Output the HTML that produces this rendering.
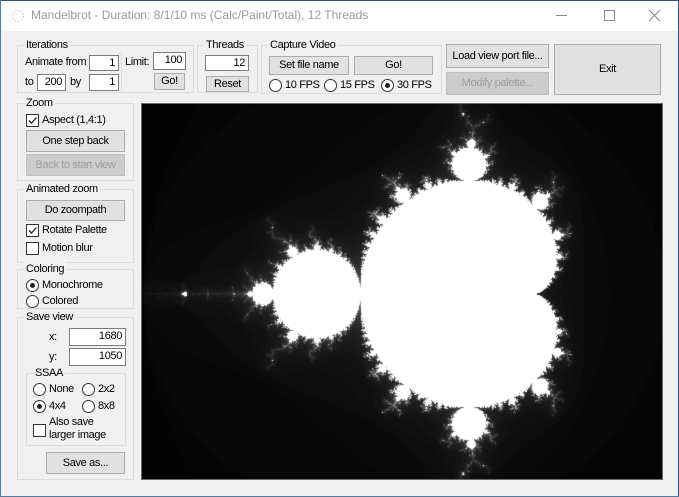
<!DOCTYPE html>
<html><head><style>
*{box-sizing:border-box;margin:0;padding:0}
body{width:679px;height:497px;background:#f0f0f0;font-family:"Liberation Sans",sans-serif;font-size:11px;letter-spacing:-0.35px;color:#000;position:relative;overflow:hidden}
.a{position:absolute;white-space:nowrap}
.tb{position:absolute;left:0;top:0;width:679px;height:31px;background:#fff}
.g{position:absolute;border:1px solid #dcdcdc}
.gl{position:absolute;background:#f0f0f0;padding:0 2px;top:-8px;left:6px;font-size:11px;line-height:14px}
.in{position:absolute;background:#fff;border:1px solid #7a7a7a;text-align:right;padding-right:3px;line-height:15px;font-size:11px}
.bt{position:absolute;background:#e1e1e1;border:1px solid #adadad;text-align:center;font-size:11px}
.dis{background:#cccccc;border-color:#bfbfbf;color:#9d9d9d}
.rd{position:absolute;width:13px;height:13px;border:1px solid #333;border-radius:50%;background:#fff}
.rd.on::after{content:"";position:absolute;left:3px;top:3px;width:5px;height:5px;border-radius:50%;background:#222}
.cb{position:absolute;width:13px;height:13px;border:1px solid #333;background:#fff}
</style></head><body>
<div class="tb"></div>
<div class="a" style="left:0;top:0;width:679px;height:1px;background:#2e5282"></div>
<div class="a" style="left:0;top:0;width:1px;height:497px;background:#5a7aa0"></div>
<div class="a" style="right:0;top:0;width:1px;height:497px;background:#2e5282"></div>
<div class="a" style="left:0;bottom:0;width:679px;height:1px;background:#5a7aa0"></div>
<svg class="a" style="left:11px;top:9px" width="14" height="14"><circle cx="7" cy="7" r="5.5" fill="none" stroke="#ccc" stroke-dasharray="2 1.5"/></svg>
<div class="a" style="left:31px;top:8px;font-size:12px;letter-spacing:0;color:#9a9a9a">Mandelbrot - Duration: 8/1/10 ms (Calc/Paint/Total), 12 Threads</div>
<div class="a" style="left:556px;top:15px;width:11px;height:1px;background:#888"></div>
<div class="a" style="left:604px;top:10px;width:11px;height:11px;border:1px solid #888"></div>
<svg class="a" style="left:648px;top:9px" width="13" height="13"><path d="M1 1L12 12M12 1L1 12" stroke="#888" stroke-width="1"/></svg>

<div class="g" style="left:17px;top:45px;width:177px;height:48px"><span class="gl">Iterations</span></div>
<div class="a" style="left:25px;top:56px">Animate from</div>
<div class="in" style="left:89px;top:55px;width:30px;height:16px">1</div>
<div class="a" style="left:121px;top:52px;width:1px;height:38px;background:#dcdcdc"></div>
<div class="a" style="left:125px;top:56px">Limit:</div>
<div class="in" style="left:153px;top:52px;width:33px;height:18px">100</div>
<div class="a" style="left:25px;top:76px">to</div>
<div class="in" style="left:37px;top:74px;width:29px;height:17px">200</div>
<div class="a" style="left:70px;top:76px">by</div>
<div class="in" style="left:89px;top:74px;width:30px;height:17px">1</div>
<div class="bt" style="left:154px;top:73px;width:31px;height:17px;line-height:15px">Go!</div>

<div class="g" style="left:197px;top:45px;width:61px;height:48px"><span class="gl">Threads</span></div>
<div class="in" style="left:205px;top:55px;width:44px;height:16px">12</div>
<div class="bt" style="left:206px;top:76px;width:43px;height:16px;line-height:14px">Reset</div>

<div class="g" style="left:261px;top:45px;width:181px;height:49px"><span class="gl">Capture Video</span></div>
<div class="bt" style="left:269px;top:56px;width:80px;height:19px;line-height:17px">Set file name</div>
<div class="bt" style="left:354px;top:56px;width:79px;height:19px;line-height:17px">Go!</div>
<div class="rd" style="left:269px;top:79px"></div><div class="a" style="left:285px;top:79px">10 FPS</div>
<div class="rd" style="left:324px;top:79px"></div><div class="a" style="left:340px;top:79px">15 FPS</div>
<div class="rd on" style="left:381px;top:79px"></div><div class="a" style="left:397px;top:79px">30 FPS</div>

<div class="bt" style="left:446px;top:44px;width:103px;height:24px;line-height:22px">Load view port file...</div>
<div class="bt dis" style="left:446px;top:72px;width:103px;height:23px;line-height:21px">Modify palette...</div>
<div class="bt" style="left:554px;top:44px;width:107px;height:51px;line-height:49px">Exit</div>

<div class="g" style="left:17px;top:103px;width:117px;height:78px"><span class="gl">Zoom</span></div>
<div class="cb" style="left:26px;top:114px"></div><svg class="a" style="left:27px;top:115px" width="11" height="11"><path d="M2 5.5L4.5 8L9.5 2.5" fill="none" stroke="#222" stroke-width="1.3"/></svg>
<div class="a" style="left:42px;top:114px">Aspect (1,4:1)</div>
<div class="bt" style="left:26px;top:130px;width:99px;height:22px;line-height:20px">One step back</div>
<div class="bt dis" style="left:26px;top:154px;width:99px;height:22px;line-height:20px">Back to start view</div>

<div class="g" style="left:17px;top:189px;width:117px;height:74px"><span class="gl">Animated zoom</span></div>
<div class="bt" style="left:26px;top:200px;width:99px;height:21px;line-height:19px">Do zoompath</div>
<div class="cb" style="left:26px;top:224px"></div><svg class="a" style="left:27px;top:225px" width="11" height="11"><path d="M2 5.5L4.5 8L9.5 2.5" fill="none" stroke="#222" stroke-width="1.3"/></svg>
<div class="a" style="left:42px;top:224px">Rotate Palette</div>
<div class="cb" style="left:26px;top:242px"></div>
<div class="a" style="left:42px;top:242px">Motion blur</div>

<div class="g" style="left:17px;top:269px;width:117px;height:40px"><span class="gl">Coloring</span></div>
<div class="rd on" style="left:26px;top:279px"></div><div class="a" style="left:42px;top:279px">Monochrome</div>
<div class="rd" style="left:26px;top:295px"></div><div class="a" style="left:42px;top:295px">Colored</div>

<div class="g" style="left:17px;top:317px;width:117px;height:163px"><span class="gl">Save view</span></div>
<div class="a" style="left:49px;top:331px">x:</div>
<div class="in" style="left:69px;top:328px;width:57px;height:18px">1680</div>
<div class="a" style="left:49px;top:351px">y:</div>
<div class="in" style="left:69px;top:348px;width:57px;height:18px">1050</div>
<div class="g" style="left:26px;top:373px;width:100px;height:73px"><span class="gl">SSAA</span></div>
<div class="rd" style="left:33px;top:383px"></div><div class="a" style="left:49px;top:383px">None</div>
<div class="rd" style="left:82px;top:383px"></div><div class="a" style="left:98px;top:383px">2x2</div>
<div class="rd on" style="left:33px;top:400px"></div><div class="a" style="left:49px;top:400px">4x4</div>
<div class="rd" style="left:82px;top:400px"></div><div class="a" style="left:98px;top:400px">8x8</div>
<div class="cb" style="left:33px;top:424px"></div>
<div class="a" style="left:49px;top:416px;line-height:13px">Also save<br>larger image</div>
<div class="bt" style="left:46px;top:452px;width:79px;height:22px;line-height:20px">Save as...</div>

<div class="a" style="left:141px;top:103px;width:522px;height:377px;border:1px solid #6a6a6a;background:#000"></div>
<canvas id="c" width="520" height="375" style="position:absolute;left:142px;top:104px"></canvas>
<script>
var c=document.getElementById('c'),x=c.getContext('2d'),W=520,H=375,im=x.createImageData(W,H),d=im.data;
var s=174,cx=360-142,cy=293-104+0.5,L=100;
for(var j=0;j<H;j++)for(var i=0;i<W;i++){
var cr=-0.75+(i-cx)/s,ci=(j-cy)/s,zr=0,zi=0,n=0;
while(n<L&&zr*zr+zi*zi<4){var t=zr*zr-zi*zi+cr;zi=2*zr*zi+ci;zr=t;n++;}
var v=n>=L?255:Math.round(n*255/L);var k=(j*W+i)*4;d[k]=d[k+1]=d[k+2]=v;d[k+3]=255;}
x.putImageData(im,0,0);
</script>
</body></html>
